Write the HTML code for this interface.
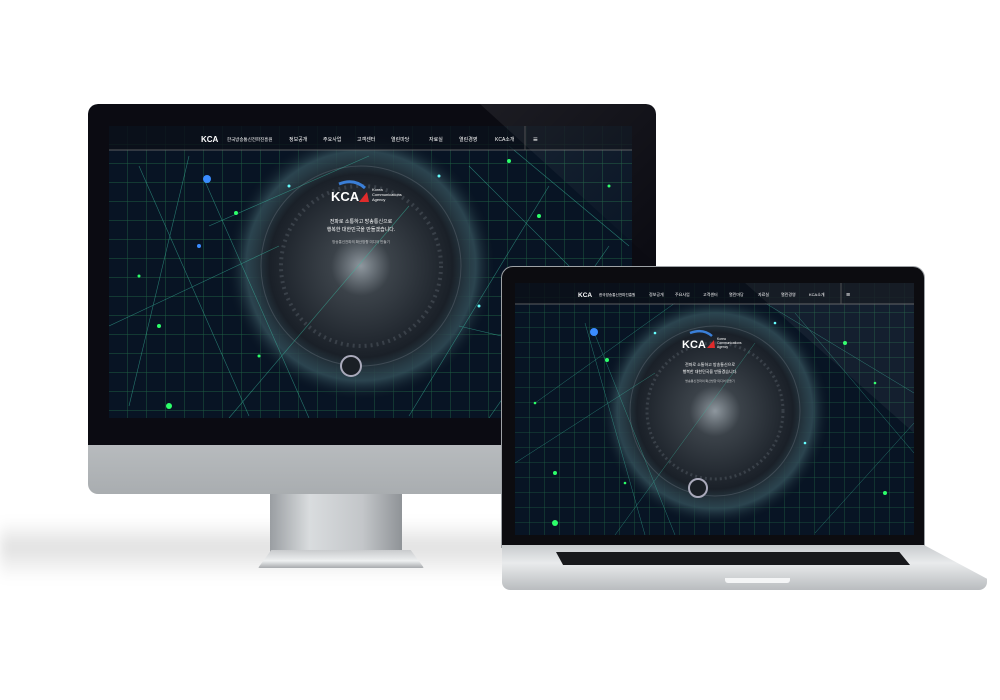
<!DOCTYPE html>
<html><head><meta charset="utf-8">
<style>
html,body{margin:0;padding:0;background:#fff;width:1000px;height:700px;overflow:hidden;font-family:"Liberation Sans","Noto Sans CJK KR",sans-serif}
.abs{position:absolute}
</style></head><body>
<div class="abs" style="left:0;top:520px;width:520px;height:60px;background:linear-gradient(180deg,rgba(0,0,0,0) 0%,rgba(0,0,0,.12) 45%,rgba(0,0,0,0) 100%);filter:blur(6px)"></div>
<div class="abs" style="left:270px;top:490px;width:132px;height:62px;background:linear-gradient(90deg,#9a9ea2,#d9dcde 30%,#c3c6c9 70%,#8f9397)"></div>
<div class="abs" style="left:258px;top:550px;width:166px;height:18px;background:linear-gradient(180deg,#c9cbcd,#eef0f1 60%,#a7aaad);clip-path:polygon(8% 0,92% 0,100% 100%,0 100%);border-radius:2px"></div>
<div class="abs" style="left:88px;top:104px;width:568px;height:390px;border-radius:10px;background:linear-gradient(180deg,#c6c9cc,#e2e4e6 50%,#a9adb0);overflow:hidden">
  <div class="abs" style="left:0;top:0;width:568px;height:341px;background:#0b0b12;border-radius:10px 10px 0 0"></div>
</div>
<svg class="abs" style="left:109px;top:126px" width="523" height="292" viewBox="0 0 523 292">
<defs>
<pattern id="g1" width="19" height="19" patternUnits="userSpaceOnUse"><path d="M19 0V19H0" fill="none" stroke="#23704a" stroke-width="0.9" opacity=".8"/></pattern>
<radialGradient id="s1" cx="0.5" cy="0.5" r="0.5"><stop offset="0" stop-color="#8e979e"/><stop offset=".22" stop-color="#3b4249"/><stop offset=".68" stop-color="#1a2028"/><stop offset=".85" stop-color="#34505a" stop-opacity=".8"/><stop offset="1" stop-color="#0a1420" stop-opacity="0"/></radialGradient>
</defs>
<rect width="523" height="292" fill="#081424"/>
<rect width="523" height="292" fill="url(#g1)"/>
<circle cx="252" cy="140" r="135" fill="url(#s1)"/>
<circle cx="252" cy="140" r="100" fill="none" stroke="#5b6670" stroke-width="1" opacity=".5"/>
<circle cx="252" cy="140" r="80" fill="none" stroke="#6a747c" stroke-width="4" stroke-dasharray="2 4" opacity=".35"/>
<circle cx="242" cy="240" r="10" fill="#1a1f25" stroke="#aab" stroke-width="2"/>
<g stroke="#3ab8a0" stroke-width=".6" opacity=".6">
<line x1="30" y1="40" x2="140" y2="290"/><line x1="80" y1="30" x2="20" y2="280"/><line x1="400" y1="20" x2="520" y2="120"/><line x1="300" y1="290" x2="440" y2="60"/><line x1="100" y1="100" x2="260" y2="30"/><line x1="350" y1="200" x2="520" y2="240"/>
<line x1="95" y1="53" x2="200" y2="292"/><line x1="0" y1="200" x2="170" y2="120"/><line x1="360" y1="40" x2="520" y2="200"/><line x1="120" y1="292" x2="300" y2="80"/><line x1="380" y1="292" x2="500" y2="120"/>
</g>
<g fill="#2cff6a"><circle cx="98" cy="53" r="4" fill="#3a8cff"/><circle cx="127" cy="87" r="2"/><circle cx="50" cy="200" r="2"/><circle cx="400" cy="35" r="2"/><circle cx="480" cy="220" r="2"/><circle cx="60" cy="280" r="3"/><circle cx="430" cy="90" r="2"/>
<circle cx="30" cy="150" r="1.5"/><circle cx="180" cy="60" r="1.5" fill="#6ff"/><circle cx="330" cy="50" r="1.5" fill="#6ff"/><circle cx="370" cy="180" r="1.5" fill="#6ff"/><circle cx="150" cy="230" r="1.5"/><circle cx="500" cy="60" r="1.5"/><circle cx="450" cy="150" r="1.5"/><circle cx="90" cy="120" r="2" fill="#3a8cff"/></g>
<rect width="523" height="24" fill="#0b0f18" opacity=".8"/>
<line x1="0" y1="24" x2="523" y2="24" stroke="#777" stroke-width=".8"/>
<line x1="416" y1="0" x2="416" y2="24" stroke="#555" stroke-width=".8"/>
<g fill="#fff" font-size="5" font-family="Liberation Sans,Noto Sans CJK KR,sans-serif">
<text x="92" y="16" font-size="8" font-weight="bold">KCA</text><text x="118" y="15" font-size="4.5">한국방송통신전파진흥원</text>
<text x="180" y="15">정보공개</text><text x="214" y="15">주요사업</text><text x="248" y="15">고객센터</text><text x="282" y="15">열린마당</text><text x="320" y="15">자료실</text><text x="350" y="15">열린경영</text><text x="386" y="15">KCA소개</text>
<text x="424" y="16" font-size="8">≡</text>
<text x="222" y="75" font-size="13" font-weight="bold">KCA</text>
<text x="263" y="65" font-size="4">Korea</text><text x="263" y="70" font-size="4">Communications</text><text x="263" y="75" font-size="4">Agency</text>
<text x="252" y="97" font-size="5" text-anchor="middle">전파로 소통하고 방송통신으로</text>
<text x="252" y="105" font-size="5" text-anchor="middle">행복한 대한민국을 만들겠습니다.</text>
<text x="252" y="117" font-size="3.5" text-anchor="middle" opacity=".7">방송통신전파의 확산방향 미디어 만들기</text>
</g>
<path d="M230 58 Q245 52 256 62" stroke="#3a7fd8" stroke-width="3" fill="none"/><path d="M250 76 L258 66 L260 76Z" fill="#e02b2b"/>
</svg>
<div class="abs" style="left:501px;top:266px;width:424px;height:282px;border-radius:12px 12px 0 0;background:#0c0c10;border:1px solid #9ea2a6;box-sizing:border-box"></div>
<div class="abs" style="left:502px;top:545px;width:485px;height:45px;background:linear-gradient(180deg,#c8cbce,#e9ebec 40%,#b9bcbf);clip-path:polygon(0 0,87% 0,100% 75%,100% 100%,0 100%);border-radius:0 0 8px 8px"></div>
<div class="abs" style="left:556px;top:552px;width:354px;height:13px;background:#18191c;clip-path:polygon(0 0,97% 0,100% 100%,2% 100%)"></div>
<div class="abs" style="left:725px;top:578px;width:65px;height:5px;background:#f4f5f6;border-radius:0 0 3px 3px"></div>
<svg class="abs" style="left:515px;top:283px" width="399" height="252" viewBox="0 0 399 252">
<defs>
<pattern id="g2" width="15" height="15" patternUnits="userSpaceOnUse"><path d="M15 0V15H0" fill="none" stroke="#23704a" stroke-width="0.8" opacity=".8"/></pattern>
<radialGradient id="s2" cx="0.5" cy="0.5" r="0.5"><stop offset="0" stop-color="#8e979e"/><stop offset=".22" stop-color="#3b4249"/><stop offset=".68" stop-color="#1a2028"/><stop offset=".85" stop-color="#34505a" stop-opacity=".8"/><stop offset="1" stop-color="#0a1420" stop-opacity="0"/></radialGradient>
</defs>
<rect width="399" height="252" fill="#081424"/>
<rect width="399" height="252" fill="url(#g2)"/>
<circle cx="200" cy="128" r="115" fill="url(#s2)"/>
<circle cx="200" cy="128" r="85" fill="none" stroke="#5b6670" stroke-width="1" opacity=".5"/>
<circle cx="200" cy="128" r="68" fill="none" stroke="#6a747c" stroke-width="3" stroke-dasharray="2 3" opacity=".35"/>
<circle cx="183" cy="205" r="9" fill="#1a1f25" stroke="#aab" stroke-width="2"/>
<g stroke="#3ab8a0" stroke-width=".5" opacity=".6"><line x1="70" y1="40" x2="130" y2="252"/><line x1="20" y1="120" x2="160" y2="20"/><line x1="300" y1="250" x2="399" y2="140"/><line x1="250" y1="20" x2="399" y2="110"/>
<line x1="79" y1="49" x2="160" y2="252"/><line x1="0" y1="180" x2="140" y2="90"/><line x1="280" y1="30" x2="399" y2="170"/><line x1="100" y1="252" x2="240" y2="60"/></g>
<g fill="#2cff6a"><circle cx="79" cy="49" r="4" fill="#3a8cff"/><circle cx="92" cy="77" r="2"/><circle cx="40" cy="190" r="2"/><circle cx="330" cy="60" r="2"/><circle cx="370" cy="210" r="2"/><circle cx="40" cy="240" r="3"/>
<circle cx="140" cy="50" r="1.3" fill="#6ff"/><circle cx="260" cy="40" r="1.3" fill="#6ff"/><circle cx="290" cy="160" r="1.3" fill="#6ff"/><circle cx="20" cy="120" r="1.3"/><circle cx="360" cy="100" r="1.3"/><circle cx="110" cy="200" r="1.3"/></g>
<rect width="399" height="21" fill="#0b0f18" opacity=".8"/>
<line x1="0" y1="21" x2="399" y2="21" stroke="#777" stroke-width=".8"/>
<line x1="326" y1="0" x2="326" y2="21" stroke="#555" stroke-width=".8"/>
<g fill="#fff" font-size="4" font-family="Liberation Sans,Noto Sans CJK KR,sans-serif">
<text x="63" y="14" font-size="6.5" font-weight="bold">KCA</text><text x="84" y="13" font-size="3.6">한국방송통신전파진흥원</text>
<text x="134" y="13">정보공개</text><text x="160" y="13">주요사업</text><text x="188" y="13">고객센터</text><text x="214" y="13">열린마당</text><text x="243" y="13">자료실</text><text x="266" y="13">열린경영</text><text x="294" y="13">KCA소개</text>
<text x="331" y="14" font-size="7">≡</text>
<text x="167" y="65" font-size="11" font-weight="bold">KCA</text>
<text x="202" y="57" font-size="3.3">Korea</text><text x="202" y="61" font-size="3.3">Communications</text><text x="202" y="65" font-size="3.3">Agency</text>
<text x="195" y="83" font-size="4" text-anchor="middle">전파로 소통하고 방송통신으로</text>
<text x="195" y="90" font-size="4" text-anchor="middle">행복한 대한민국을 만들겠습니다.</text>
<text x="195" y="99" font-size="3" text-anchor="middle" opacity=".7">방송통신전파의 확산방향 미디어 만들기</text>
</g>
<path d="M175 50 Q188 45 197 53" stroke="#3a7fd8" stroke-width="2.5" fill="none"/><path d="M192 65 L199 57 L200 65Z" fill="#e02b2b"/>
<polygon points="230,0 399,0 399,150" fill="#fff" opacity=".05"/>
</svg>
<div class="abs" style="left:480px;top:104px;width:176px;height:160px;background:linear-gradient(135deg,rgba(255,255,255,.07),rgba(255,255,255,0));clip-path:polygon(0 0,100% 0,100% 100%)"></div>
</body></html>
